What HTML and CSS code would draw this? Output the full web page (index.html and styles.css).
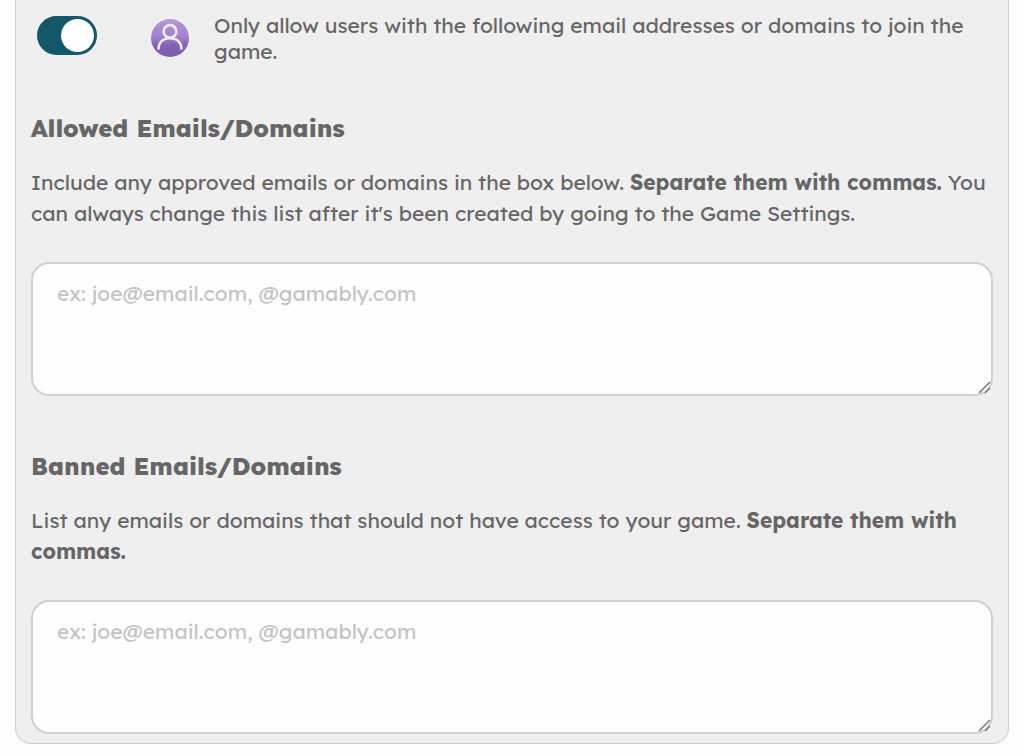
FILE: index.html
```
<!DOCTYPE html>
<html lang="en">
<head>
  <meta charset="utf-8">
  <meta name="viewport" content="width=device-width, initial-scale=1">
  <title>Game Access</title>
  <link rel="stylesheet" href="styles.css">
</head>
<body>
  <form class="access-panel">
    <div class="access-toggle">
      <input type="checkbox" id="limitAccess" class="switch" checked>
      <svg class="user-icon" viewBox="0 0 38 38" aria-hidden="true">
        <defs>
          <linearGradient id="userFill" x1="0" y1="0" x2="0" y2="1">
            <stop offset="0" stop-color="#b7a0d0"/>
            <stop offset="0.2" stop-color="#ad8bd3"/>
            <stop offset="0.45" stop-color="#a583ce"/>
            <stop offset="0.7" stop-color="#8262b5"/>
            <stop offset="1" stop-color="#7c5cb0"/>
          </linearGradient>
        </defs>
        <circle cx="19" cy="19" r="19" fill="url(#userFill)"/>
        <g fill="none" stroke="#efebf3" stroke-width="2.6" stroke-linecap="round">
          <circle cx="19" cy="12.5" r="6.4"/>
          <path d="M7.6 29.5C8 22.8 12.5 19.2 19 19.2S30 22.8 30.4 29.5"/>
        </g>
      </svg>
      <label for="limitAccess">Only allow users with the following email addresses or domains to join the game.</label>
    </div>

    <section class="email-section">
      <h2><label for="allowedEmails">Allowed Emails/Domains</label></h2>
      <p>Include any approved emails or domains in the box below. <strong>Separate them with commas.</strong> You can always change this list after it's been created by going to the Game Settings.</p>
      <textarea id="allowedEmails" placeholder="ex: joe@email.com, @gamably.com"></textarea>
    </section>

    <section class="email-section">
      <h2><label for="bannedEmails">Banned Emails/Domains</label></h2>
      <p>List any emails or domains that should not have access to your game. <strong>Separate them with commas.</strong></p>
      <textarea id="bannedEmails" placeholder="ex: joe@email.com, @gamably.com"></textarea>
    </section>
  </form>
</body>
</html>
```
FILE: styles.css
```
* {
  box-sizing: border-box;
}
body {
  margin: 0 15px 12px;
  background: #fdfdfd;
  color: #666;
  font-family: Lexend, Inter, sans-serif;
  font-size: 21px;
  font-weight: 400;
}
.access-panel {
  padding: 12px 15px 9px;
  background: #efefef;
  border: 1px solid #d0d0d0;
  border-top: none;
  border-radius: 0 0 16px 16px;
}
.access-toggle {
  display: flex;
  align-items: flex-start;
  padding: 0 6px;
  line-height: 26px;
}
.access-toggle label {
  flex: 1;
}
/* Toggle switch */
.switch {
  appearance: none;
  flex: none;
  width: 60px;
  height: 39px;
  margin: 4px 54px 0 0;
  padding: 3px;
  background: #125869;
  border-radius: 20px;
  cursor: pointer;
}
.switch::before {
  content: "";
  display: block;
  width: 33px;
  height: 33px;
  background: white;
  border-radius: 50%;
}
.switch:checked::before {
  margin-left: 21px;
}
.user-icon {
  flex: none;
  width: 38px;
  height: 38px;
  margin: 7px 25px 0 0;
}
/* Email lists */
.email-section {
  margin-top: 48px;
}
.email-section + .email-section {
  margin-top: 54px;
}
h2 {
  margin: 0 0 23px;
  font-size: 24px;
  font-weight: 800;
  line-height: 32px;
}
p {
  margin: 0 0 33px;
  line-height: 31px;
}
strong {
  font-weight: 700;
}
textarea {
  display: block;
  width: 100%;
  height: 134px;
  padding: 14px 24px;
  border: 2px solid #d0d0d0;
  border-radius: 18px;
  background: #fefefe;
  color: #666;
  font: inherit;
  line-height: 30px;
  resize: vertical;
}
textarea::placeholder {
  color: #c4c4c4;
}
/* Drag handle in the corner */
textarea::-webkit-resizer {
  background: url("data:image/svg+xml,%3Csvg xmlns='http://www.w3.org/2000/svg' width='15' height='15'%3E%3Cpath d='M3 14L14 3M9 14L14 9' stroke='%23777' stroke-width='1.5'/%3E%3C/svg%3E") no-repeat right bottom;
}
```
